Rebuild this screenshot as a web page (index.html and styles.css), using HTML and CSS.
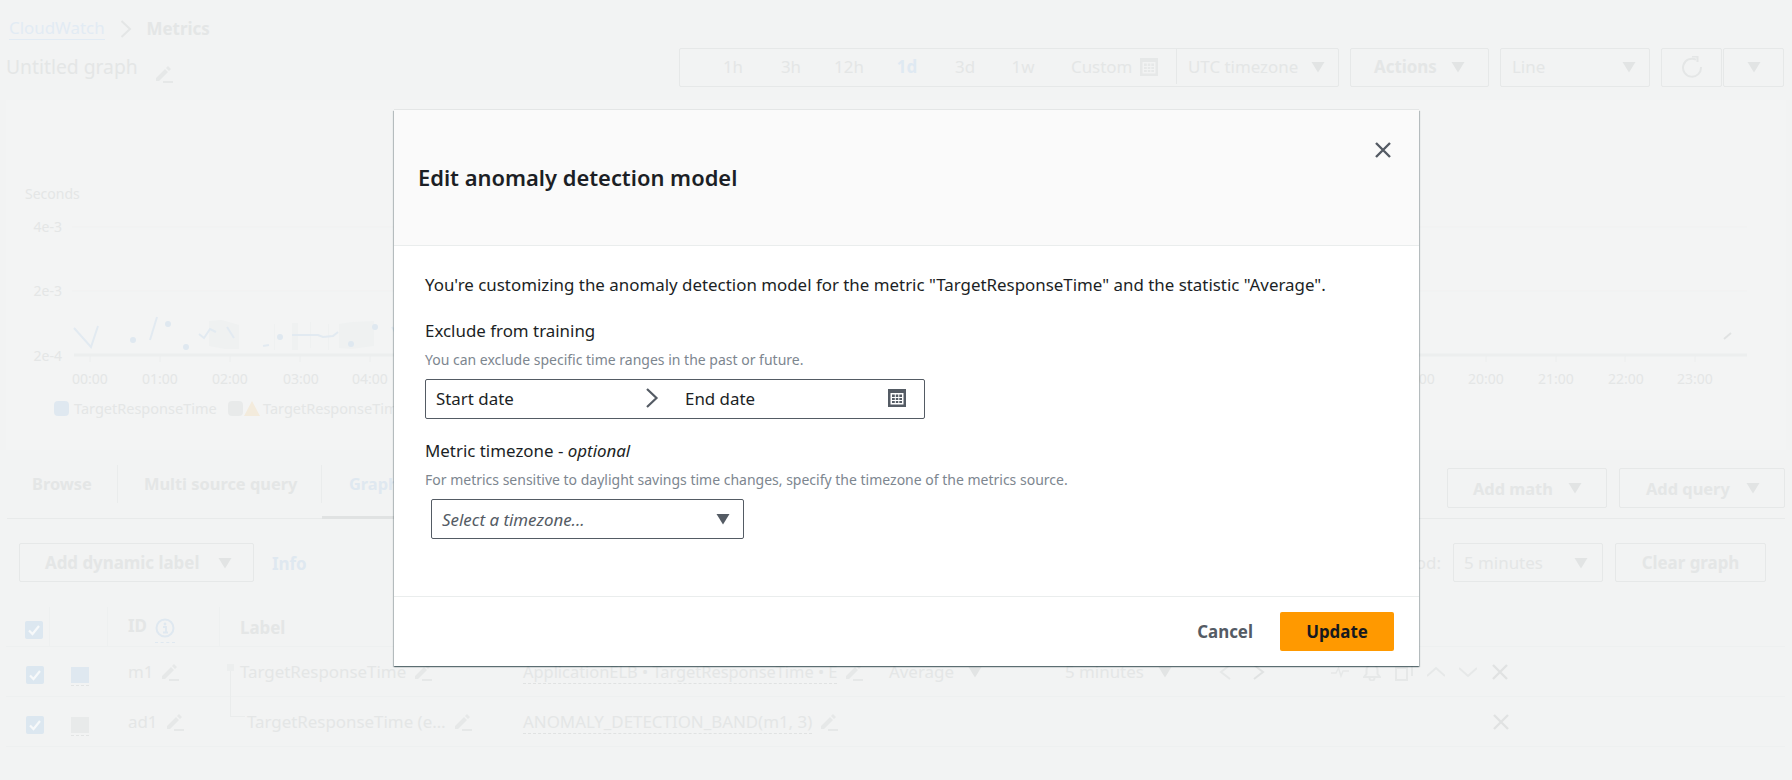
FILE: index.html
```html
<!DOCTYPE html>
<html>
<head>
	<meta charset="utf-8">
	<title>CloudWatch Metrics</title>
	<link rel="stylesheet" href="styles.css">
</head>
<body>

<!-- Shared icons -->
<svg class="icon-defs" width="0" height="0">
	<symbol id="pencil" viewBox="0 0 18 18">
		<path d="M1 13 L10 4 L13 7 L4 16 H1 Z M11 3 L13 1 L16 4 L14 6 Z" fill="currentColor"/>
		<path d="M8 17 H18" stroke="currentColor" stroke-width="2" fill="none"/>
	</symbol>
	<symbol id="caret" viewBox="0 0 14 12">
		<path d="M0.5 1 H13.5 L7 11.5 Z" fill="currentColor"/>
	</symbol>
	<symbol id="calendar" viewBox="0 0 18 18">
		<path fill-rule="evenodd" fill="currentColor" d="M0 0 H18 V18 H0 Z M2.5 4 V15.5 H15.5 V4 Z"/>
		<path fill="currentColor" d="M4 5.5 H6.8 V8 H4 Z M7.8 5.5 H10.3 V8 H7.8 Z M11.3 5.5 H14 V8 H11.3 Z M4 9 H6.8 V11 H4 Z M7.8 9 H10.3 V11 H7.8 Z M11.3 9 H14 V11 H11.3 Z M4 12 H6.8 V14 H4 Z M7.8 12 H10.3 V14 H7.8 Z M11.3 12 H14 V14 H11.3 Z"/>
	</symbol>
	<symbol id="close" viewBox="0 0 18 18">
		<path d="M2 2 L16 16 M16 2 L2 16" stroke="currentColor" stroke-width="2.4" fill="none"/>
	</symbol>
	<symbol id="check" viewBox="0 0 18 18">
		<path d="M0 2 Q0 0 2 0 H16 Q18 0 18 2 V16 Q18 18 16 18 H2 Q0 18 0 16 Z" fill="#dce7f0"/>
		<path d="M4 9.5 L7.5 13 L14 5" stroke="#f7f9fa" stroke-width="2.2" fill="none"/>
	</symbol>
</svg>

<div class="crumbs">
	<a class="crumb-link">CloudWatch</a>
	<svg class="crumb-sep" width="12" height="20" viewBox="0 0 12 20"><path d="M1.5 2 L10 10 L1.5 18" fill="none" stroke="currentColor" stroke-width="2"/></svg>
	<span class="crumb-current">Metrics</span>
</div>

<div class="title-bar">
	<span class="graph-title">Untitled graph</span>
	<svg class="icon title-pencil"><use href="#pencil"/></svg>
	<div class="toolbar">
		<div class="tool-group">
			<div class="ranges">
				<span class="range">1h</span>
				<span class="range">3h</span>
				<span class="range">12h</span>
				<span class="range range-on">1d</span>
				<span class="range">3d</span>
				<span class="range">1w</span>
			</div>
			<span class="custom">Custom</span>
			<svg class="tool-cal"><use href="#calendar"/></svg>
			<div class="tz">UTC timezone <svg class="caret"><use href="#caret"/></svg></div>
		</div>
		<div class="tool-btn btn-actions"><b>Actions</b> <svg class="caret"><use href="#caret"/></svg></div>
		<div class="tool-btn btn-line">Line <svg class="caret"><use href="#caret"/></svg></div>
		<div class="tool-btn btn-refresh">
			<svg width="22" height="22" viewBox="0 0 22 22"><path d="M15 3.6 A9 9 0 1 0 20 11" fill="none" stroke="currentColor" stroke-width="2"/><path d="M11 0.5 H16.5 V6" fill="none" stroke="currentColor" stroke-width="2"/></svg>
		</div>
		<div class="tool-btn btn-more"><svg class="caret"><use href="#caret"/></svg></div>
	</div>
</div>

<div class="chart">
	<svg class="chart-svg" width="1780" height="350" viewBox="6 100 1780 350">
		<text class="chart-text" x="25" y="199">Seconds</text>
		<path class="grid" d="M72 227 H1747 M72 291 H1747"/>
		<g class="chart-text" text-anchor="end">
			<text x="62" y="232">4e-3</text>
			<text x="62" y="296">2e-3</text>
			<text x="62" y="361">2e-4</text>
		</g>
		<path class="axis" d="M74 355 H1747"/>
		<path class="ticks" d="M90 356 V362 M160 356 V362 M230 356 V362 M300 356 V362 M370 356 V362 M1486 356 V362 M1556 356 V362 M1625 356 V362 M1695 356 V362"/>
		<g class="bands">
			<path d="M209 321 L222 320 L239 325 V349 L225 349 L209 346 Z"/>
			<path d="M292 323 H298 V350 H292 Z"/>
			<path d="M339 324 L352 322 L374 321 V346 L351 349 L339 348 Z"/>
			<path d="M274 324 H275 V350 H274 Z M310 322 H311 V348 H310 Z M328 324 H329 V350 H328 Z"/>
		</g>
		<g class="series">
			<path d="M74 328 L91 347 L98 326"/>
			<path d="M150 340 L157 317"/>
			<path d="M199 334 L204 338 L210 329 L216 332"/>
			<path d="M227 327 L234 338"/>
			<path d="M263 346 L269 345"/>
			<path d="M292 335 L318 335 L323 337 L333 336 L338 332"/>
			<path d="M392 327 L400 340"/>
		</g>
		<path class="edit-mark" d="M1724 339 L1731 333"/>
		<g class="dots">
			<circle cx="133" cy="340" r="3"/>
			<circle cx="168" cy="324" r="3"/>
			<circle cx="186" cy="347" r="3"/>
			<circle cx="280" cy="337" r="3"/>
			<circle cx="351" cy="344" r="3"/>
			<circle cx="375" cy="327" r="3"/>
		</g>
		<g class="chart-text" text-anchor="middle">
			<text x="90" y="384">00:00</text>
			<text x="160" y="384">01:00</text>
			<text x="230" y="384">02:00</text>
			<text x="301" y="384">03:00</text>
			<text x="370" y="384">04:00</text>
			<text x="1417" y="384">19:00</text>
			<text x="1486" y="384">20:00</text>
			<text x="1556" y="384">21:00</text>
			<text x="1626" y="384">22:00</text>
			<text x="1695" y="384">23:00</text>
		</g>
		<rect class="legend-blue" x="54" y="401" width="15" height="15" rx="4"/>
		<text class="chart-text legend-text" x="74" y="414">TargetResponseTime</text>
		<rect class="legend-grey" x="228" y="401" width="15" height="15" rx="4"/>
		<path class="legend-warn" d="M252 401 L260 416 H244 Z"/>
		<text class="chart-text legend-text" x="263" y="414">TargetResponseTime</text>
	</svg>
</div>

<div class="tabs">
	<span class="tab tab-browse">Browse</span>
	<span class="tab tab-source">Multi source query</span>
	<span class="tab tab-on">Graphed metrics (2)</span>
	<div class="tab-actions">
		<div class="btn btn-math"><b>Add math</b><svg class="caret"><use href="#caret"/></svg></div>
		<div class="btn btn-query"><b>Add query</b><svg class="caret"><use href="#caret"/></svg></div>
	</div>
</div>

<div class="controls">
	<div class="btn btn-dynamic"><b>Add dynamic label</b><svg class="caret"><use href="#caret"/></svg></div>
	<span class="info-link">Info</span>
	<div class="period">
		<span>Period:</span>
		<div class="btn btn-period">5 minutes<svg class="caret"><use href="#caret"/></svg></div>
		<div class="btn btn-clear"><b>Clear graph</b></div>
	</div>
</div>

<div class="metrics">
	<div class="row row-head">
		<div class="cell cell-check"><svg class="checkbox"><use href="#check"/></svg></div>
		<div class="cell cell-color"></div>
		<div class="cell cell-id">
			<b class="id-head">ID</b>
			<span class="info-wrap"><svg class="info-icon" width="20" height="20" viewBox="0 0 20 20"><circle cx="10" cy="10" r="8.5" fill="none" stroke="currentColor" stroke-width="2"/><circle cx="10" cy="6" r="1.4" fill="currentColor"/><path d="M8 9 H11 V14 M8 14.5 H13" fill="none" stroke="currentColor" stroke-width="1.8"/></svg></span>
		</div>
		<div class="cell cell-label"><b>Label</b></div>
	</div>
	<div class="row">
		<div class="cell cell-check"><svg class="checkbox"><use href="#check"/></svg></div>
		<div class="cell cell-color"><span class="swatch swatch-blue"></span></div>
		<div class="cell cell-id">m1 <svg class="icon"><use href="#pencil"/></svg></div>
		<div class="cell cell-label">TargetResponseTime <svg class="icon"><use href="#pencil"/></svg></div>
		<div class="cell cell-detail"><span class="detail-text detail-long">ApplicationELB • TargetResponseTime • E</span> <svg class="icon"><use href="#pencil"/></svg></div>
		<div class="cell cell-stat">Average <svg class="caret"><use href="#caret"/></svg></div>
		<div class="cell cell-period">5 minutes <svg class="caret"><use href="#caret"/></svg></div>
		<div class="cell cell-tools">
			<svg class="tool" viewBox="0 0 18 18"><path d="M13 2 L4 9 L13 16" class="tool-line"/></svg>
			<svg class="tool tool-bright" viewBox="0 0 18 18"><path d="M5 2 L14 9 L5 16" class="tool-line"/></svg>
			<span class="tool-gap"></span>
			<svg class="tool" viewBox="0 0 18 18"><path d="M0 10 H5 L7.5 5 L10 13 L12 8 H18" class="tool-line tool-thin"/></svg>
			<svg class="tool" viewBox="0 0 18 18"><path d="M1 14 H17 L14.5 11 V7 A5.5 5.5 0 0 0 3.5 7 V11 Z M6.5 15 A2.5 2.5 0 0 0 11.5 15" class="tool-line"/></svg>
			<svg class="tool" viewBox="0 0 18 18"><path d="M1 5 H12 V17 H1 Z M5 1 H17 V13" class="tool-line"/></svg>
			<svg class="tool" viewBox="0 0 18 18"><path d="M0 13 L9 5 L18 13" class="tool-line"/></svg>
			<svg class="tool" viewBox="0 0 18 18"><path d="M0 5 L9 13 L18 5" class="tool-line"/></svg>
			<svg class="tool tool-x"><use href="#close"/></svg>
		</div>
	</div>
	<div class="row">
		<div class="cell cell-check"><svg class="checkbox"><use href="#check"/></svg></div>
		<div class="cell cell-color"><span class="swatch swatch-grey"></span></div>
		<div class="cell cell-id">ad1 <svg class="icon"><use href="#pencil"/></svg></div>
		<div class="cell cell-label cell-child">TargetResponseTime (e… <svg class="icon"><use href="#pencil"/></svg></div>
		<div class="cell cell-detail"><span class="detail-text">ANOMALY_DETECTION_BAND(m1, 3)</span> <svg class="icon"><use href="#pencil"/></svg></div>
		<div class="cell cell-stat"></div>
		<div class="cell cell-period"></div>
		<div class="cell cell-tools cell-tools-end"><svg class="tool tool-x"><use href="#close"/></svg></div>
	</div>
	<div class="tree"></div>
</div>

<div class="modal">
	<div class="modal-head">
		<h2 class="modal-title">Edit anomaly detection model</h2>
		<svg class="modal-close"><use href="#close"/></svg>
	</div>
	<div class="modal-body">
		<p class="intro">You're customizing the anomaly detection model for the metric "TargetResponseTime" and the statistic "Average".</p>
		<div class="field-label">Exclude from training</div>
		<div class="field-hint">You can exclude specific time ranges in the past or future.</div>
		<div class="date-range">
			<span class="date-start">Start date</span>
			<svg class="date-arrow" width="14" height="22" viewBox="0 0 14 22"><path d="M2 2 L11.5 11 L2 20" fill="none" stroke="currentColor" stroke-width="2.2"/></svg>
			<span class="date-end">End date</span>
			<svg class="date-cal"><use href="#calendar"/></svg>
		</div>
		<div class="field-label field-label-tz">Metric timezone - <i>optional</i></div>
		<div class="field-hint field-hint-tz">For metrics sensitive to daylight savings time changes, specify the timezone of the metrics source.</div>
		<div class="tz-select">
			<i>Select a timezone...</i>
			<svg class="tz-caret"><use href="#caret"/></svg>
		</div>
	</div>
	<div class="modal-foot">
		<span class="cancel">Cancel</span>
		<button class="update">Update</button>
	</div>
</div>

</body>
</html>
```

FILE: styles.css
```css
* {
	box-sizing: border-box;
}

html, body {
	height: 780px;
}

body {
	margin: 0;
	position: relative;
	overflow: hidden;
	font-family: "Noto Sans", sans-serif;
	font-size: 16.9px;
	color: #e4e6e6;
	background: #f2f3f3;
}

b {
	font-weight: 700;
}

.icon-defs {
	display: block;
	height: 0;
}

.icon {
	width: 18px;
	height: 18px;
	color: #e6e8e8;
	flex: none;
}

.caret {
	width: 14px;
	height: 12px;
	color: #e2e4e4;
	flex: none;
}

/* Breadcrumb */
.crumbs {
	height: 48px;
	padding: 17px 0 0 9px;
	display: flex;
	align-items: flex-start;
	gap: 15px;
	line-height: 24px;
}

.crumb-link {
	color: #e2ebf3;
	border-bottom: 1px solid #e2ebf3;
	height: 23px;
	line-height: 22px;
}

.crumb-sep {
	margin-top: 2px;
}

.crumb-current {
	font-weight: 700;
}

/* Title and toolbar */
.title-bar {
	height: 39px;
	padding: 0 8px 0 6px;
	display: flex;
	align-items: center;
}

.graph-title {
	font-size: 19.3px;
	margin-top: -3px;
}

.title-pencil {
	margin: 12px 0 0 17px;
}

.toolbar {
	margin-left: auto;
	display: flex;
	height: 39px;
}

.tool-group, .tool-btn, .btn {
	border: 1px solid #e6e8e8;
	border-radius: 2px;
	display: flex;
	align-items: center;
}

.tool-group, .tool-btn {
	padding-bottom: 2px;
}

.tool-group {
	width: 660px;
}

.ranges {
	display: flex;
	padding-left: 24px;
}

.range {
	width: 58px;
	text-align: center;
}

.range-on {
	color: #dfe9f2;
	font-weight: 700;
}

.custom {
	margin-left: 19px;
}

.tool-cal {
	width: 18px;
	height: 18px;
	margin-left: 8px;
	color: #e6e8e8;
}

.tz {
	margin-left: auto;
	width: 162px;
	height: 100%;
	border-left: 1px solid #e6e8e8;
	display: flex;
	align-items: center;
	justify-content: space-between;
	padding: 0 13px 0 11px;
}

.btn-actions {
	margin-left: 11px;
	width: 139px;
	padding-left: 23px;
	padding-right: 23px;
	justify-content: space-between;
}

.btn-line {
	margin-left: 11px;
	width: 150px;
	padding-left: 11px;
	padding-right: 13px;
	justify-content: space-between;
}

.btn-refresh {
	margin-left: 11px;
	width: 61px;
	justify-content: center;
}

.btn-more {
	margin-left: 1px;
	width: 61px;
	justify-content: center;
}

/* Graph */
.chart {
	margin: 13px 6px 0;
	height: 350px;
	background: #f3f4f4;
}

.chart-svg {
	display: block;
}

.chart-text {
	font-family: "Noto Sans", sans-serif;
	font-size: 14px;
	fill: #e4e6e6;
}

.legend-text {
	font-size: 14.5px;
}

.grid {
	stroke: #f0f1f1;
	fill: none;
}

.axis {
	stroke: #eceeee;
	stroke-width: 3;
	fill: none;
}

.ticks {
	stroke: #eceeee;
	fill: none;
}

.bands path {
	fill: #eff1f1;
}

.series path {
	fill: none;
	stroke: #e2eaf1;
	stroke-width: 2;
}

.edit-mark {
	stroke: #e0e2e2;
	stroke-width: 2;
}

.dots circle {
	fill: #dfe8f0;
}

.legend-blue {
	fill: #dfe8f0;
}

.legend-grey {
	fill: #e8eaea;
}

.legend-warn {
	fill: #f3ebdc;
}

/* Tabs */
.tabs {
	margin: 0 7px;
	height: 69px;
	display: flex;
	align-items: flex-start;
	border-bottom: 1px solid #e8eaea;
	font-size: 16.4px;
	font-weight: 700;
	padding-top: 15px;
}

.tab {
	height: 38px;
	line-height: 37px;
	padding-left: 26px;
	border-right: 1px solid #eaecec;
}

.tab-browse {
	width: 111px;
	padding-left: 25px;
}

.tab-source {
	width: 204px;
}

.tab-on {
	color: #dfe8f0;
	border: 0;
	height: 54px;
	padding-left: 27px;
	border-bottom: 3px solid #e0e2e2;
}

.tab-actions {
	margin-left: auto;
	margin-top: 3px;
	display: flex;
	gap: 12px;
	font-weight: 400;
}

.btn {
	height: 40px;
	justify-content: space-between;
}

.btn-math {
	width: 160px;
	padding: 0 24px 0 25px;
}

.btn-query {
	width: 166px;
	padding: 0 24px 0 26px;
}

/* Controls */
.controls {
	height: 88px;
	padding: 24px 26px 0 19px;
	display: flex;
	align-items: flex-start;
}

.btn-dynamic {
	width: 235px;
	height: 39px;
	padding: 0 21px 0 25px;
}

.info-link {
	margin: 9px 0 0 18px;
	color: #dfe8f0;
	font-weight: 700;
}

.period {
	margin-left: auto;
	display: flex;
	align-items: center;
}

.period > span {
	margin-right: 12px;
}

.btn-period {
	width: 150px;
	height: 39px;
	padding: 0 14px 0 10px;
}

.btn-clear {
	width: 151px;
	height: 39px;
	margin-left: 12px;
	justify-content: center;
}

/* Metric rows */
.metrics {
	margin-left: 6px;
	margin-right: 7px;
	position: relative;
}

.row {
	display: grid;
	grid-template-columns: 44px 58px 112px 283px 366px 176px 161px 1fr;
	height: 50px;
	border-bottom: 1px solid #eef0f0;
	align-items: center;
}

.row-head {
	height: 40px;
}

.row-head .cell {
	height: 100%;
	border-right: 1px solid #eef0f0;
}

.cell {
	display: flex;
	align-items: center;
	padding-left: 20px;
	gap: 8px;
	white-space: nowrap;
}

.cell-check {
	padding-left: 20px;
}

.row-head .cell-check {
	padding-left: 19px;
}

.cell-color {
	padding-left: 21px;
}

.cell-label b {
	margin-top: 2px;
}

.checkbox {
	width: 18px;
	height: 18px;
	margin-top: 6px;
}

.swatch {
	display: block;
	width: 18px;
	height: 16px;
	margin-top: 6px;
	position: relative;
}

.swatch::after {
	content: "";
	position: absolute;
	left: 0;
	right: 0;
	bottom: -3px;
	border-bottom: 1px dashed #e2e4e4;
}

.swatch-blue {
	background: #dfe8f0;
}

.swatch-grey {
	background: #e8eaea;
}

.id-head {
	margin-top: -3px;
}

.info-wrap {
	display: block;
	height: 25px;
	margin-top: 7px;
	border-bottom: 1px dashed #dfe8f0;
}

.info-icon {
	display: block;
	color: #dfe8f0;
}

.cell-child {
	padding-left: 27px;
}

.detail-text {
	border-bottom: 1px dashed #e0e2e2;
	line-height: 23px;
}

.detail-long {
	font-size: 16.4px;
}

.cell-stat, .cell-period {
	gap: 14px;
}

.cell-tools {
	padding-left: 11px;
	gap: 14px;
}

.cell-tools-end {
	justify-content: flex-end;
	padding-right: 275px;
}

.tool {
	width: 18px;
	height: 18px;
	color: #e6e8e8;
	flex: none;
}

.tool-line {
	fill: none;
	stroke: currentColor;
	stroke-width: 2;
}

.tool-thin {
	stroke-width: 1.5;
}

.tool-bright, .tool-x {
	color: #e0e2e2;
}

.tool-gap {
	width: 36px;
}

.tree {
	position: absolute;
	left: 224px;
	top: 57px;
	width: 15px;
	height: 53px;
	border-left: 1px solid #eaecec;
	border-bottom: 1px solid #eaecec;
}

.tree::before {
	content: "";
	position: absolute;
	left: -4px;
	top: 0;
	width: 7px;
	height: 7px;
	background: #eceeee;
}

/* Modal */
.modal {
	position: absolute;
	left: 394px;
	top: 110px;
	width: 1025px;
	height: 556px;
	background: #fff;
	display: flex;
	flex-direction: column;
	color: #1c1f25;
	box-shadow: 0 -1px 0 0 #e4e6e6, 0 1px 1px 0 rgba(0, 28, 36, 0.4), 1px 1px 1px 0 rgba(0, 28, 36, 0.2), -1px 1px 1px 0 rgba(0, 28, 36, 0.2);
}

.modal-head {
	height: 136px;
	flex: none;
	background: #fafafa;
	border-bottom: 1px solid #eaeded;
	display: flex;
	align-items: center;
	padding: 0 24px;
	position: relative;
}

.modal-title {
	margin: 0;
	font-size: 21.9px;
	font-weight: 600;
}

.modal-close {
	position: absolute;
	right: 27px;
	top: 31px;
	width: 18px;
	height: 18px;
	color: #545b64;
}

.modal-body {
	flex: 1;
	padding: 28px 31px 0;
}

.intro {
	margin: 0;
	line-height: 22px;
}

.field-label {
	margin-top: 24px;
	line-height: 22px;
}

.field-label-tz {
	margin-top: 21px;
}

.field-hint {
	margin-top: 8px;
	font-size: 14px;
	line-height: 20px;
	color: #7d868f;
}

.date-range {
	margin-top: 9px;
	width: 500px;
	height: 40px;
	border: 1px solid #545b64;
	border-radius: 2px;
	display: flex;
	align-items: center;
	padding: 0 10px 2px;
}

.date-start {
	width: 209px;
}

.date-arrow {
	color: #545b64;
	margin-right: 26px;
}

.date-cal {
	width: 18px;
	height: 18px;
	margin-left: auto;
	margin-right: 8px;
	color: #545b64;
}

.tz-select {
	margin: 9px 0 0 6px;
	width: 313px;
	height: 40px;
	border: 1px solid #545b64;
	border-radius: 2px;
	display: flex;
	align-items: center;
	justify-content: space-between;
	padding: 0 13px 0 10px;
	color: #545b64;
}

.tz-caret {
	width: 14px;
	height: 12px;
	color: #545b64;
}

.modal-foot {
	height: 70px;
	flex: none;
	border-top: 1px solid #eaeded;
	display: flex;
	align-items: center;
	justify-content: flex-end;
	padding: 0 25px 0 0;
	gap: 27px;
}

.cancel {
	font-weight: 700;
	color: #545b64;
}

.update {
	width: 114px;
	height: 39px;
	border: 0;
	border-radius: 2px;
	background: #ff9900;
	color: #16191f;
	font-family: inherit;
	font-size: 16.9px;
	font-weight: 700;
}
```
